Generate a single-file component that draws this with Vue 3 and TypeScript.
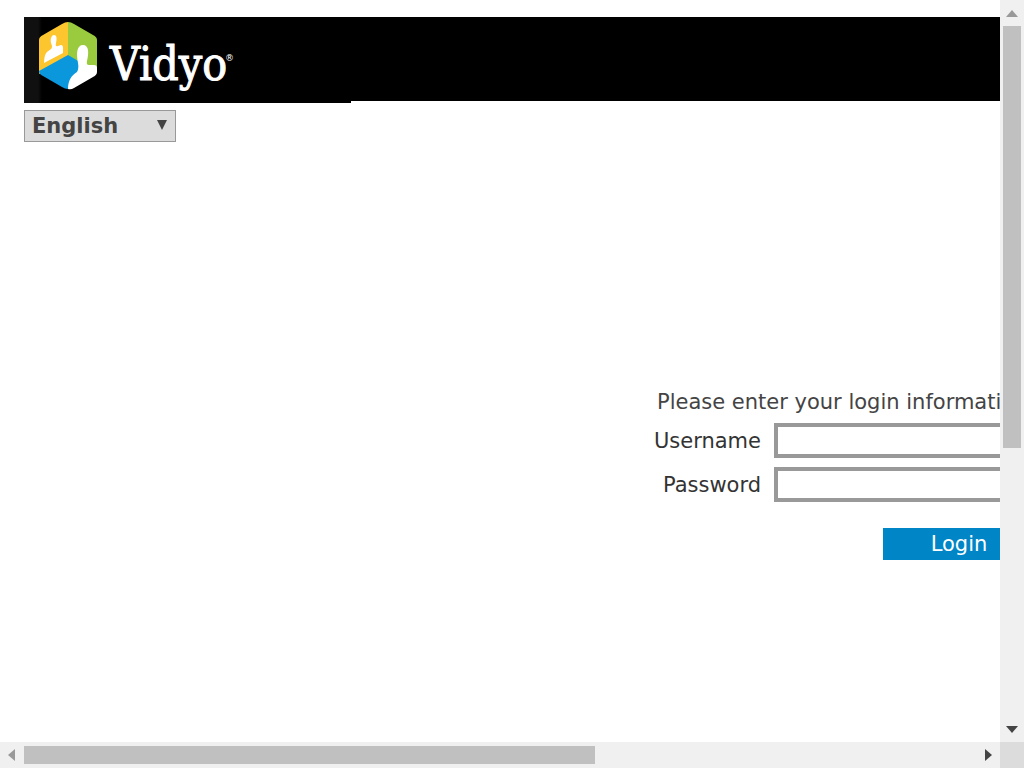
<script setup lang="ts">
import { ref } from 'vue'

const language = ref('English')
const username = ref('')
const password = ref('')
</script>

<template>
  <div class="window">
    <main class="view">
      <div class="page">
        <header class="banner">
          <div class="brand">
            <svg class="mark" viewBox="0 0 60 70" aria-hidden="true">
              <path d="M29 38V1Q26 1 23 3L4 14Q0 16 0 19V53L29 38Z" fill="#fdc62f" />
              <path d="M29 36V1Q32 1 35 3L54 14Q58 16 58 19V50L40 50Z" fill="#9aca3e" />
              <path d="M0 50L29 34L41 41L40 63L29 68Q26 68 23 66L4 55Q0 53 0 50Z" fill="#0a97dc" />
              <path d="M5 42Q5 34 8 31L12 28Q14 26 12 22C11 17 13 14 15 14C18 14 18 18 17 22Q16 26 19 25L22 24Q24 24 24 27V32Z" fill="#fff" />
              <path d="M29 68C29 59 33 54 38 51Q40 48 39 42C37 32 38 24 44 24C50 24 50 32 48 40Q47 44 50 44H55Q58 44 58 47V51Q58 54 54 56L35 67Q32 69 29 68Z" fill="#fff" />
            </svg>
            <span class="wordmark">Vidyo<sup>®</sup></span>
          </div>
        </header>

        <div class="language">
          <select v-model="language" aria-label="Language">
            <option>English</option>
          </select>
          <svg viewBox="0 0 10 10" aria-hidden="true"><path d="M0 0H10L5 10Z" /></svg>
        </div>

        <form class="login" @submit.prevent>
          <p>Please enter your login information</p>
          <label for="username">Username</label>
          <input id="username" v-model="username" type="text" />
          <label for="password">Password</label>
          <input id="password" v-model="password" type="password" />
          <button type="submit">Login</button>
        </form>
      </div>
    </main>

    <div class="bar vertical" aria-hidden="true">
      <svg class="dim" viewBox="0 0 12 7"><path d="M0 7L6 0L12 7Z" /></svg>
      <div class="track"><div class="thumb"></div></div>
      <svg viewBox="0 0 12 7"><path d="M0 0H12L6 7Z" /></svg>
    </div>
    <div class="bar horizontal" aria-hidden="true">
      <svg class="dim" viewBox="0 0 7 12"><path d="M7 0L0 6L7 12Z" /></svg>
      <div class="track"><div class="thumb"></div></div>
      <svg viewBox="0 0 7 12"><path d="M0 0L7 6L0 12Z" /></svg>
    </div>
    <div class="corner"></div>
  </div>
</template>

<style scoped>
.window {
  display: grid;
  grid-template-columns: minmax(0, 1fr) 24px;
  grid-template-rows: minmax(0, 1fr) 26px;
  height: 100vh;
  background: #fff;
  color: #444;
  font: 21px/24px "DejaVu Sans", sans-serif;
}
.view {
  overflow: hidden;
}
.page {
  width: max-content;
  min-width: 166%;
  padding: 17px 24px;
  box-sizing: border-box;
}
.banner {
  height: 84px;
  background: #000;
}
.brand {
  display: flex;
  width: 327px;
  height: 86px;
  background: linear-gradient(90deg, #101010 14px, #000 18px);
}
.mark {
  flex: none;
  width: 60px;
  height: 70px;
  margin: 4px 11px 0 15px;
}
.wordmark {
  display: flex;
  color: #fff;
  font: 46px/60px "DejaVu Serif Condensed", "DejaVu Serif", serif;
  -webkit-text-stroke: 1px #fff;
  padding-top: 17px;
}
.wordmark sup {
  font: 9px/12px "DejaVu Sans", sans-serif;
  -webkit-text-stroke: 0;
  margin-left: -2px;
  padding-top: 18px;
}
.language {
  position: relative;
  width: 152px;
  margin-top: 9px;
}
.language select {
  display: block;
  width: 100%;
  height: 32px;
  padding: 0 7px;
  border: 1px solid #999;
  border-radius: 0;
  appearance: none;
  background: #dcdcdc;
  color: #444;
  font: bold 21px/24px "DejaVu Sans", sans-serif;
}
.language svg {
  position: absolute;
  top: 10px;
  right: 9px;
  width: 10px;
  height: 10px;
  fill: #444;
  pointer-events: none;
}
.login {
  display: grid;
  grid-template-columns: 106px 261px;
  column-gap: 13px;
  row-gap: 9px;
  align-items: center;
  width: max-content;
  margin: 248px 0 0 631px;
}
.login p {
  grid-column: 1 / -1;
  margin: 0 0 0 2px;
  white-space: nowrap;
}
.login label {
  justify-self: end;
  color: #333;
}
.login input {
  width: 100%;
  height: 35px;
  box-sizing: border-box;
  padding: 0 6px;
  border: 4px solid #999;
  border-radius: 0;
  background: #fff;
  font: inherit;
}
.login button {
  grid-column: 2;
  justify-self: end;
  width: 152px;
  height: 32px;
  margin-top: 17px;
  padding: 0;
  border: 0;
  background: #0085c7;
  color: #fff;
  font: inherit;
}
.bar {
  display: flex;
  align-items: center;
  background: #f0f0f0;
}
.bar svg {
  flex: none;
  fill: #444;
}
.bar .dim {
  fill: #999;
}
.track {
  flex: 1;
}
.thumb {
  background: #c0c0c0;
}
.vertical {
  flex-direction: column;
  padding: 10px 0 9px;
}
.vertical svg {
  width: 12px;
  height: 7px;
}
.vertical .track {
  margin: 9px 0;
}
.vertical .thumb {
  width: 18px;
  height: 61%;
}
.horizontal {
  padding: 0 8px;
}
.horizontal svg {
  width: 7px;
  height: 12px;
}
.horizontal .track {
  margin: 0 9px;
}
.horizontal .thumb {
  width: 60%;
  height: 18px;
}
.corner {
  background: #dcdcdc;
}
</style>

<style>
body {
  margin: 0;
}
</style>
